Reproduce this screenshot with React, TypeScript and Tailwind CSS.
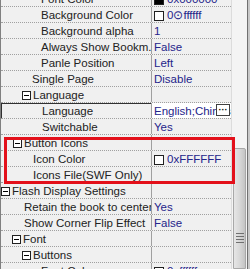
import React from 'react';

type Row = {
  kind: 'cat' | 'item';
  x: number;
  name: string;
  value?: React.ReactNode;
  selected?: boolean;
};

function Swatch({ color }: { color: string }) {
  return <span className="inline-block w-[10px] h-[10px] border border-[#202020] mr-[3px] shrink-0" style={{ backgroundColor: color }} />;
}

function MinusBox() {
  return (
    <span className="w-[9px] h-[9px] border border-[#202020] bg-white flex items-center justify-center shrink-0">
      <span className="w-[5px] h-px bg-black" />
    </span>
  );
}

// x = left edge (page px) of the text or of the collapse box
const rows: Row[] = [
  { kind: 'item', x: 41, name: 'Font Color', value: <><Swatch color="#000000" />0x000000</> },
  { kind: 'item', x: 41, name: 'Background Color', value: <><Swatch color="#ffffff" />0⊙ffffff</> },
  { kind: 'item', x: 41, name: 'Background alpha', value: '1' },
  { kind: 'item', x: 41, name: 'Always Show Bookm...', value: 'False' },
  { kind: 'item', x: 41, name: 'Panle Position', value: 'Left' },
  { kind: 'item', x: 32, name: 'Single Page', value: 'Disable' },
  { kind: 'cat', x: 22, name: 'Language' },
  { kind: 'item', x: 42, name: 'Language', selected: true },
  { kind: 'item', x: 42, name: 'Switchable', value: 'Yes' },
  { kind: 'cat', x: 13, name: 'Button Icons' },
  { kind: 'item', x: 33, name: 'Icon Color', value: <><Swatch color="#ffffff" />0xFFFFFF</> },
  { kind: 'item', x: 33, name: 'Icons File(SWF Only)', value: '' },
  { kind: 'cat', x: 1, name: 'Flash Display Settings' },
  { kind: 'item', x: 24, name: 'Retain the book to center', value: 'Yes' },
  { kind: 'item', x: 24, name: 'Show Corner Flip Effect', value: 'False' },
  { kind: 'cat', x: 12, name: 'Font' },
  { kind: 'cat', x: 22, name: 'Buttons' },
  { kind: 'item', x: 41, name: 'Font Color', value: <><Swatch color="#ffffff" />0xffffff</> },
];

function GridRow({ row }: { row: Row }) {
  return (
    <div className="flex h-4 border-b border-dotted border-[#a0a0a0]">
      <div
        className={`w-[150px] shrink-0 flex items-center overflow-hidden whitespace-nowrap text-[#222222] pt-[2px] ${row.selected ? 'border-t border-l border-[#303030]' : ''}`}
        style={{ paddingLeft: row.x - 1 - (row.selected ? 1 : 0) }}
      >
        {row.kind === 'cat' ? (
          <>
            <MinusBox />
            <span className="ml-[2px]">{row.name}</span>
          </>
        ) : (
          row.name
        )}
      </div>
      <div className="w-px bg-[#a0a0a0] shrink-0" />
      {row.selected ? (
        <div className="flex-1 flex items-center bg-white text-[#24248a] pl-[2px] overflow-hidden whitespace-nowrap relative">
          <span className="pt-[2px]">English;Chinese</span>
          <span className="absolute right-[1px] top-[1px] w-[14px] h-[12px] bg-white border border-[#404040] flex items-center justify-center text-[9px] font-bold leading-none text-black">
            ···
          </span>
        </div>
      ) : (
        <div className="flex-1 flex items-center pl-[2px] pt-[2px] overflow-hidden whitespace-nowrap text-[#24248a]">
          {row.value}
        </div>
      )}
    </div>
  );
}

export default function App() {
  return (
    <div className="relative w-[250px] h-[269px] overflow-hidden flex bg-[#f0f0f0] text-[11.5px] leading-none" style={{ fontFamily: '"Liberation Sans", Arial, sans-serif' }}>
      <div className="w-px bg-[#808080] shrink-0" />
      <div className="w-[230px] shrink-0 overflow-hidden">
        <div className="mt-[-9px]">
          {rows.map((r, i) => (
            <GridRow key={i} row={r} />
          ))}
        </div>
      </div>
      <div className="w-[16px] shrink-0 flex flex-col bg-[#f4f4f4] border-l border-[#dcdcdc]">
        <div className="h-[148px]" />
        <div className="flex-1 mx-[1px] rounded-t-[2px] border border-[#a8a8a8] bg-gradient-to-r from-[#e6e6e6] via-[#d8d8d8] to-[#c4c4c4] flex flex-col items-center pt-[84px] gap-[2px]">
          <div className="w-[8px] h-px bg-[#707070]" />
          <div className="w-[8px] h-px bg-[#707070]" />
          <div className="w-[8px] h-px bg-[#707070]" />
          <div className="w-[8px] h-px bg-[#707070]" />
        </div>
      </div>
      <div className="w-px bg-[#707070] shrink-0" />
      <div className="flex-1 bg-[#c8c8c8]" />
      {/* red highlight annotation */}
      <div className="absolute left-[4px] top-[137px] w-[231px] h-[47px] border-[3px] border-[#e3101a] pointer-events-none" />
    </div>
  );
}
